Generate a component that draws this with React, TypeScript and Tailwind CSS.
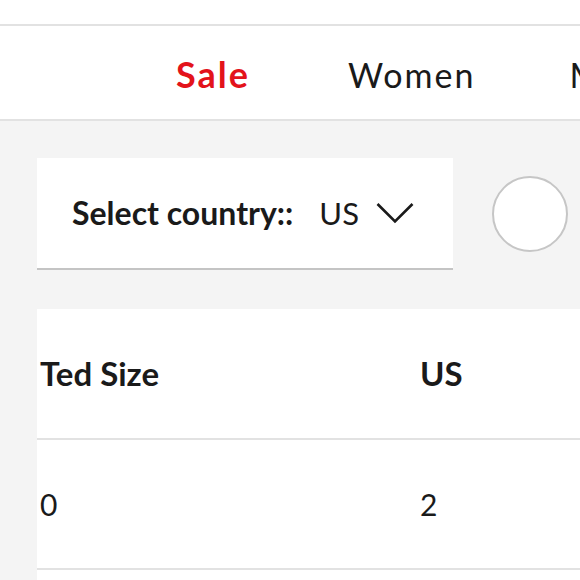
export default function App() {
  const font = { fontFamily: "Lato, 'Noto Sans', sans-serif" };
  return (
    <div className="w-[580px] h-[580px] overflow-hidden bg-[#f4f4f4] text-[#1a1a1a]" style={font}>
      <div className="h-[24px] bg-white" />
      <div className="h-[2px] bg-[#e2e2e2]" />
      <nav className="h-[93px] bg-white flex items-center pl-[176px] pt-[3px] whitespace-nowrap overflow-hidden">
        <span className="text-[36px] font-bold text-[#e3131b] tracking-[2px]">Sale</span>
        <span className="ml-[98px] text-[34px] tracking-[2px]">Women</span>
        <span className="ml-[94px] text-[34px] tracking-[2px]">Men</span>
      </nav>
      <div className="h-[2px] bg-[#e2e2e2]" />
      <div className="flex items-center pl-[37px] pt-[37px] gap-[39px]">
        <div className="w-[416px] h-[112px] bg-white border-b-2 border-[#c4c4c4] flex items-center pl-[35px] whitespace-nowrap">
          <span className="text-[32px] font-bold">Select country::</span>
          <span className="text-[31px] ml-[26px]">US</span>
          <svg className="ml-[17px]" width="38" height="22" viewBox="0 0 38 22" fill="none">
            <path d="M1.5 2 L19 19.5 L36.5 2" stroke="#1a1a1a" strokeWidth="2.6" />
          </svg>
        </div>
        <div className="w-[76px] h-[76px] shrink-0 rounded-full bg-white border-2 border-[#c6c6c6]" />
      </div>
      <div className="ml-[37px] mt-[39px] bg-white">
        <div className="h-[131px] flex items-center border-b-2 border-[#e2e2e2] pt-[1px]">
          <span className="w-[383px] pl-[3px] text-[33px] font-bold">Ted Size</span>
          <span className="text-[33px] font-bold">US</span>
        </div>
        <div className="h-[130px] flex items-center border-b-2 border-[#e2e2e2]">
          <span className="w-[383px] pl-[3px] text-[30px]">0</span>
          <span className="text-[30px]">2</span>
        </div>
        <div className="h-[40px]" />
      </div>
    </div>
  );
}
